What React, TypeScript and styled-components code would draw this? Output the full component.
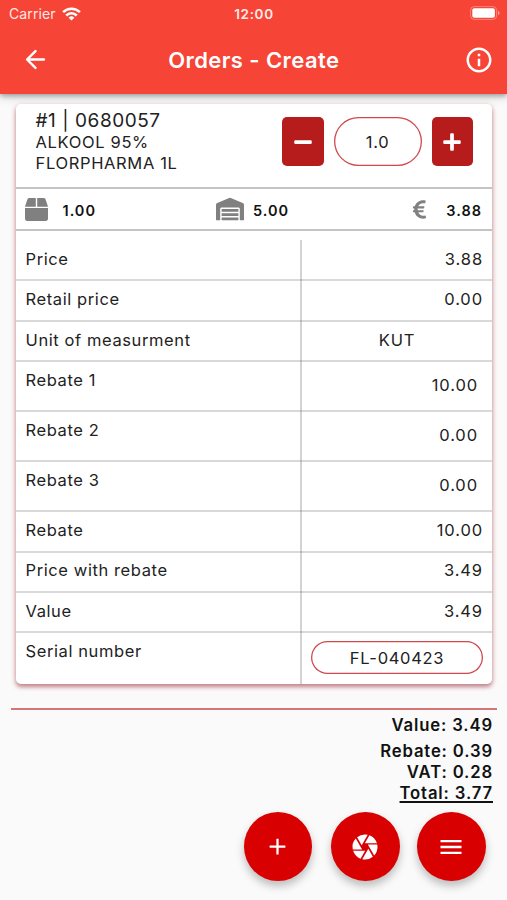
import React from 'react';
import styled, { createGlobalStyle, css } from 'styled-components';
import { FaBox, FaEuroSign, FaMinus, FaPlus, FaWarehouse } from 'react-icons/fa';
import { MdAdd, MdCamera, MdInfoOutline, MdMenu } from 'react-icons/md';

const GlobalStyle = createGlobalStyle`
  * { box-sizing: border-box; }
  body {
    margin: 0;
    background: #fafafa;
    color: #222;
    font-family: Inter, "Liberation Sans", sans-serif;
  }
  button { font: inherit; border: 0; padding: 0; cursor: pointer; }
  svg { display: block; flex: none; }
`;

const Screen = styled.div`
  width: 507px;
  height: 900px;
  display: flex;
  flex-direction: column;
  overflow: hidden;
  background: #fafafa;
`;

const Header = styled.header`
  height: 94px;
  flex: none;
  background: #f64436;
  color: #fff;
  box-shadow: 0 2px 5px rgba(0, 0, 0, 0.32), 0 4px 10px rgba(0, 0, 0, 0.1);
`;

const StatusBar = styled.div`
  height: 27px;
  padding: 0 7px 0 9px;
  display: grid;
  grid-template-columns: 1fr auto 1fr;
  align-items: center;
  font-size: 14px;
  color: #ffe9e6;
`;

const Carrier = styled.div`
  display: flex;
  align-items: center;
  gap: 6px;
  letter-spacing: 0.1px;
`;

const Clock = styled.div`
  margin-left: -1px;
  font-weight: 600;
  font-size: 13.5px;
  letter-spacing: 0.65px;
`;

const BatterySlot = styled.div`
  justify-self: end;
  margin-top: -1px;
`;

const TitleBar = styled.div`
  height: 66px;
  padding: 0 16.5px 1px 21px;
  display: grid;
  grid-template-columns: 27px 1fr 27px;
  align-items: center;
`;

const Title = styled.h1`
  margin: 0 0 0 -4px;
  text-align: center;
  font-size: 22px;
  font-weight: 600;
  letter-spacing: 0.42px;
`;

const IconButton = styled.button`
  background: none;
  color: inherit;
  display: grid;
  place-items: center;
`;

const Card = styled.section`
  margin: 10px 15px 0 15.5px;
  height: 580px;
  flex: none;
  background: #fff;
  border-radius: 5px;
  box-shadow: 0 3px 4px rgba(150, 40, 55, 0.5), 0 1px 6px rgba(183, 28, 28, 0.18);
`;

const Product = styled.div`
  height: 85px;
  padding: 5px 19px 0 20px;
  display: flex;
  justify-content: space-between;
  border-bottom: 2px solid #c4c4c4;
`;

const ProductName = styled.div`
  font-size: 16.5px;
  line-height: 21px;
  letter-spacing: 0.65px;
`;

const ProductCode = styled.div`
  font-size: 19px;
  line-height: 23px;
  letter-spacing: 0.55px;
`;

const Stepper = styled.div`
  display: flex;
  gap: 10px;
  height: 49px;
  margin-top: 8px;
`;

const StepButton = styled.button`
  width: 41.5px;
  border-radius: 5px;
  background: #b71c1c;
  color: #fff;
  display: grid;
  place-items: center;
`;

const Pill = styled.div<{ $width: number; $height: number }>`
  width: ${(p) => p.$width}px;
  height: ${(p) => p.$height}px;
  box-shadow: inset 0 0 0 1.3px #d0484c;
  border-radius: 26px;
  display: grid;
  place-items: center;
  letter-spacing: 0.7px;
  font-size: 16.5px;
`;

const Stats = styled.div`
  height: 42px;
  padding: 0 10px 0 9px;
  display: flex;
  align-items: center;
  justify-content: space-between;
  border-bottom: 2px solid #c4c4c4;
`;

const Stat = styled.div<{ $gap: number }>`
  display: flex;
  align-items: center;
  gap: ${(p) => p.$gap}px;
  font-size: 14.5px;
  font-weight: 600;
  letter-spacing: 1px;
  color: #111;

  svg { color: #808080; }
  span { padding-top: 3px; }
`;

const Table = styled.div`
  margin-top: 9px;
  height: 444px;
  display: flex;
  flex-direction: column;
`;

const Row = styled.div<{ $height: number }>`
  height: ${(p) => p.$height}px;
  display: grid;
  grid-template-columns: 286.5px 1fr;
  font-size: 16.5px;
  line-height: 20px;

  & + & { box-shadow: inset 0 2px #d9d9d9; }
`;

const Label = styled.div`
  padding: 9.9px 0 0 10px;
  border-right: 2px solid rgba(80, 80, 80, 0.25);
  letter-spacing: 0.6px;
  ${Row}:first-child & { padding-top: 9px; }
`;

const Value = styled.div<{ $kind: Kind }>`
  padding: 9.9px 9px 0 9px;
  text-align: right;
  letter-spacing: 0.9px;
  ${Row}:first-child & { padding-top: 9px; }
  ${(p) => p.$kind === 'input' && css`padding: 14.900px 14px 0 0;`}
  ${(p) => p.$kind === 'center' && css`text-align: center;`}
`;

const Totals = styled.div`
  margin: 24px 10px 0 11px;
  padding: 5px 4px 0 0;
  height: 97px;
  flex: none;
  border-top: 2px solid #d67575;
  text-align: right;
  font-size: 16.7px;
  line-height: 21px;
  font-weight: 600;
  letter-spacing: 0.85px;
  color: #111;
`;

const TotalLine = styled.div<{ $spaced?: boolean; $underlined?: boolean }>`
  margin-bottom: ${(p) => (p.$spaced ? 4.5 : 0)}px;
  text-decoration: ${(p) => (p.$underlined ? 'underline' : 'none')};
  text-underline-offset: 1.5px;
  text-decoration-thickness: 1.5px;
`;

const Actions = styled.div`
  display: flex;
  justify-content: flex-end;
  gap: 17.5px;
  padding: 7px 21.5px 0 0;

  button:first-child { margin-right: 1.5px; }
`;

const Fab = styled.button`
  width: 68.5px;
  height: 69px;
  border-radius: 50%;
  background: #d80000;
  color: #fff;
  display: grid;
  place-items: center;
  box-shadow: 0 5px 9px rgba(0, 0, 0, 0.25);
`;

type Kind = 'text' | 'input' | 'center' | 'pill';

const rows: { label: string; value: string; kind: Kind; height: number }[] = [
  { label: 'Price', value: '3.88', kind: 'text', height: 39.4 },
  { label: 'Retail price', value: '0.00', kind: 'text', height: 40.3 },
  { label: 'Unit of measurment', value: 'KUT', kind: 'center', height: 40.3 },
  { label: 'Rebate 1', value: '10.00', kind: 'input', height: 50.1 },
  { label: 'Rebate 2', value: '0.00', kind: 'input', height: 50.1 },
  { label: 'Rebate 3', value: '0.00', kind: 'input', height: 50.1 },
  { label: 'Rebate', value: '10.00', kind: 'text', height: 40.3 },
  { label: 'Price with rebate', value: '3.49', kind: 'text', height: 40.3 },
  { label: 'Value', value: '3.49', kind: 'text', height: 40.3 },
  { label: 'Serial number', value: 'FL-040423', kind: 'pill', height: 52.8 },
];

const BackIcon = () => (
  <svg width="29" height="29" viewBox="0 0 24 24" fill="none" stroke="currentColor" strokeWidth="2" strokeLinecap="round" strokeLinejoin="round">
    <path d="M19 12H5.200M12 5l-7 7 7 7" />
  </svg>
);

const WifiIcon = () => (
  <svg width="19" height="14" viewBox="0 0 19 14" fill="none" stroke="#fff" strokeWidth="2.5">
    <path d="M1.1 5.1a12 12 0 0 1 16.8 0" />
    <path d="M4.2 8.5a7.6 7.6 0 0 1 10.6 0" />
    <path d="M6.6 10.7a4.2 4.2 0 0 1 5.8 0L9.5 13.6z" fill="#fff" stroke="none" />
  </svg>
);

const BatteryIcon = () => (
  <svg width="30" height="14" viewBox="0 0 30 14">
    <rect x="0.6" y="0.6" width="26" height="12.8" rx="3.6" fill="none" stroke="#fff" strokeOpacity="0.35" />
    <rect x="2.3" y="2.3" width="22.6" height="9.4" rx="2" fill="#fff" />
    <path d="M28 4.800v4.400c1-.4 1.5-1.200 1.5-2.200S29 5.200 28 4.800z" fill="#fff" opacity="0.5" />
  </svg>
);

export default function App() {
  return (
    <Screen>
      <GlobalStyle />
      <Header>
        <StatusBar>
          <Carrier>Carrier <WifiIcon /></Carrier>
          <Clock>12:00</Clock>
          <BatterySlot><BatteryIcon /></BatterySlot>
        </StatusBar>
        <TitleBar>
          <IconButton aria-label="Back"><BackIcon /></IconButton>
          <Title>Orders - Create</Title>
          <IconButton aria-label="Info"><MdInfoOutline size={30} /></IconButton>
        </TitleBar>
      </Header>

      <Card>
        <Product>
          <ProductName>
            <ProductCode>#1 | 0680057</ProductCode>
            ALKOOL 95%<br />FLORPHARMA 1L
          </ProductName>
          <Stepper>
            <StepButton aria-label="Decrease"><FaMinus size={20} /></StepButton>
            <Pill $width={88} $height={49}>1.0</Pill>
            <StepButton aria-label="Increase"><FaPlus size={20} /></StepButton>
          </Stepper>
        </Product>
        <Stats>
          <Stat $gap={15}><FaBox size={23} /><span>1.00</span></Stat>
          <Stat $gap={9}><FaWarehouse size={28} /><span>5.00</span></Stat>
          <Stat $gap={16}><FaEuroSign size={21} /><span>3.88</span></Stat>
        </Stats>
        <Table>
          {rows.map((row) => (
            <Row key={row.label} $height={row.height}>
              <Label>{row.label}</Label>
              <Value $kind={row.kind}>
                {row.kind === 'pill' ? <Pill $width={172} $height={33}>{row.value}</Pill> : row.value}
              </Value>
            </Row>
          ))}
        </Table>
      </Card>

      <Totals>
        <TotalLine $spaced>Value: 3.49</TotalLine>
        <TotalLine>Rebate: 0.39</TotalLine>
        <TotalLine>VAT: 0.28</TotalLine>
        <TotalLine $underlined>Total: 3.77</TotalLine>
      </Totals>

      <Actions>
        <Fab aria-label="Add"><MdAdd size={27} /></Fab>
        <Fab aria-label="Scan"><MdCamera size={30} /></Fab>
        <Fab aria-label="Menu"><MdMenu size={28} /></Fab>
      </Actions>
    </Screen>
  );
}
